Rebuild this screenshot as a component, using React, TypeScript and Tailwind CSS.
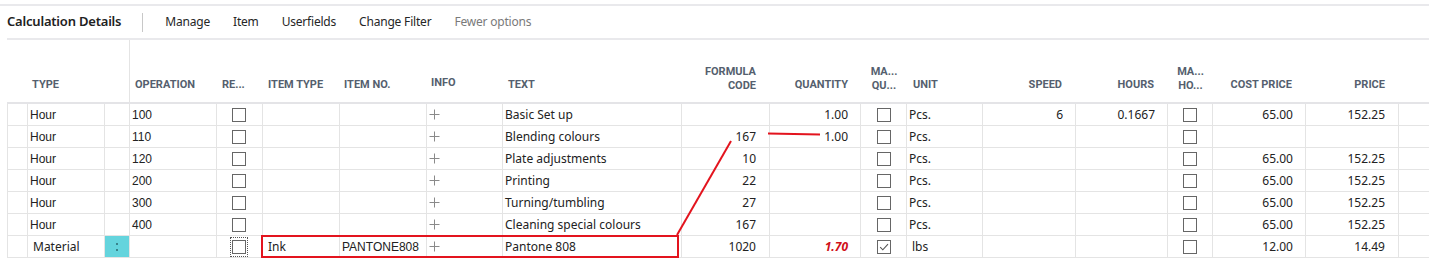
import React from "react";

const cols =
  "grid grid-cols-[21px_77px_25px_87px_46px_77px_87px_76px_179px_88px_91px_46px_76px_93px_92px_45px_93px_93px_30px]";

const seg = { fontFamily: '"Noto Sans", "Open Sans", sans-serif' };
const ari = { fontFamily: '"Liberation Sans", Arial, sans-serif' };
const hdr = { fontFamily: 'Roboto, "Liberation Sans", sans-serif' };

function Check({ checked = false, focus = false }: { checked?: boolean; focus?: boolean }) {
  return (
    <div className={`flex items-center justify-center ${focus ? "outline outline-1 outline-dotted outline-[#555] px-[1px] py-[2px]" : ""}`}>
      <div className="w-[14px] h-[14px] border border-[#666] bg-white flex items-center justify-center">
        {checked && (
          <svg width="12" height="12" viewBox="0 0 12 12">
            <path d="M2.2 6.2 L4.8 8.8 L10 3.2" stroke="#555" strokeWidth="1.1" fill="none" />
          </svg>
        )}
      </div>
    </div>
  );
}

function Plus() {
  return (
    <svg width="11" height="11" viewBox="0 0 11 11">
      <path d="M5.5 0.5 V10.5 M0.5 5.5 H10.5" stroke="#8a8a8a" strokeWidth="1" />
    </svg>
  );
}

type Row = {
  type: string;
  op: string;
  itemType?: string;
  itemNo?: string;
  text: string;
  formula: string;
  qty: string;
  unit: string;
  speed?: string;
  hours?: string;
  cost: string;
  price: string;
  material?: boolean;
};

const rows: Row[] = [
  { type: "Hour", op: "100", text: "Basic Set up", formula: "", qty: "1.00", unit: "Pcs.", speed: "6", hours: "0.1667", cost: "65.00", price: "152.25" },
  { type: "Hour", op: "110", text: "Blending colours", formula: "167", qty: "1.00", unit: "Pcs.", cost: "", price: "" },
  { type: "Hour", op: "120", text: "Plate adjustments", formula: "10", qty: "", unit: "Pcs.", cost: "65.00", price: "152.25" },
  { type: "Hour", op: "200", text: "Printing", formula: "22", qty: "", unit: "Pcs.", cost: "65.00", price: "152.25" },
  { type: "Hour", op: "300", text: "Turning/tumbling", formula: "27", qty: "", unit: "Pcs.", cost: "65.00", price: "152.25" },
  { type: "Hour", op: "400", text: "Cleaning special colours", formula: "167", qty: "", unit: "Pcs.", cost: "65.00", price: "152.25" },
  { type: "Material", op: "", itemType: "Ink", itemNo: "PANTONE808", text: "Pantone 808", formula: "1020", qty: "1.70", unit: "lbs", cost: "12.00", price: "14.49", material: true },
];

const cell = "border-r border-[#e4e4e4] h-full flex items-center overflow-hidden whitespace-nowrap text-[12px] text-[#222]";

export default function App() {
  return (
    <div className="w-[1429px] h-[262px] bg-white overflow-hidden relative">
      <div className="h-[4px]" />
      <div className="h-[34px] border-t-2 border-[#e9e9ec] flex items-center pl-[7px]" style={seg}>
        <span className="text-[13px] font-semibold text-[#212121] tracking-[-0.2px]">Calculation Details</span>
        <span className="ml-[21px] w-px h-[19px] bg-[#c8c8c8]" />
        <div className="flex items-center text-[12px] tracking-[-0.2px] text-[#262626] ml-[22px] gap-[23px]">
          <span>Manage</span>
          <span>Item</span>
          <span>Userfields</span>
          <span>Change Filter</span>
          <span className="text-[#7a7a7a]">Fewer options</span>
        </div>
      </div>
      <div className="ml-[7px] border-t-2 border-[#e9e9ec]">
        <div className={`${cols} h-[62px] text-[11px] font-bold text-[#555f6e] uppercase`} style={hdr}>
          <div />
          <div className="flex items-end pb-[9px] pl-[4px] col-span-1">TYPE</div>
          <div className="border-r border-[#e4e4e4]" />
          <div className="flex items-end pb-[9px] pl-[5px]">OPERATION</div>
          <div className="flex items-end pb-[9px] pl-[5px]">RE...</div>
          <div className="flex items-end pb-[9px] pl-[5px]">ITEM TYPE</div>
          <div className="flex items-end pb-[9px] pl-[4px]">ITEM NO.</div>
          <div className="flex items-end pb-[11px] pl-[4px]">INFO</div>
          <div className="flex items-end pb-[9px] pl-[5px]">TEXT</div>
          <div className="flex items-end justify-end pb-[9px] pr-[14px] text-right leading-[14px]">FORMULA<br />CODE</div>
          <div className="flex items-end justify-end pb-[9px] pr-[13px]">QUANTITY</div>
          <div className="flex items-end justify-center pb-[9px] leading-[14px] text-center">MA...<br />QU...</div>
          <div className="flex items-end pb-[9px] pl-[6px]">UNIT</div>
          <div className="flex items-end justify-end pb-[9px] pr-[14px]">SPEED</div>
          <div className="flex items-end justify-end pb-[9px] pr-[14px]">HOURS</div>
          <div className="flex items-end justify-center pb-[9px] leading-[14px] text-center">MA...<br />HO...</div>
          <div className="flex items-end justify-end pb-[9px] pr-[14px]">COST PRICE</div>
          <div className="flex items-end justify-end pb-[9px] pr-[14px]">PRICE</div>
          <div />
        </div>
        <div className="border-t-2 border-[#e4e4e7]">
          {rows.map((r, i) => (
            <div key={i} className={`${cols} h-[22px] border-b border-[#e4e4e4]`}>
              <div className={`${cell} border-l`} />
              <div className={`${cell} ${r.material ? "pl-[5px]" : "pl-[2px]"}`} style={r.material ? seg : ari}>{r.type}</div>
              <div className={`${cell} ${r.material ? "bg-[#64d4dd] justify-center" : ""}`}>
                {r.material && (
                  <svg width="4" height="12" viewBox="0 0 4 12">
                    <circle cx="2" cy="3" r="1" fill="#2a6a70" />
                    <circle cx="2" cy="9" r="1" fill="#2a6a70" />
                  </svg>
                )}
              </div>
              <div className={`${cell} pl-[2px]`} style={ari}>{r.op}</div>
              <div className={`${cell} justify-center pr-[1px]`}><Check focus={r.material} /></div>
              <div className={`${cell} pl-[5px]`} style={seg}>{r.itemType}</div>
              <div className={`${cell} pl-[2px]`} style={ari}>{r.itemNo}</div>
              <div className={`${cell} pl-[2px]`}><Plus /></div>
              <div className={`${cell} pl-[2px]`} style={seg}>{r.text}</div>
              <div className={`${cell} justify-end pr-[13px]`} style={seg}>{r.formula}</div>
              <div className={`${cell} justify-end pr-[12px]`} style={seg}>
                {r.material ? <span className="text-[#d0101a] font-bold italic">{r.qty}</span> : r.qty}
              </div>
              <div className={`${cell} justify-center`}><Check checked={r.material} /></div>
              <div className={`${cell} ${r.material ? "pl-[5px]" : "pl-[2px]"}`} style={seg}>{r.unit}</div>
              <div className={`${cell} justify-end pr-[12px]`} style={seg}>{r.speed}</div>
              <div className={`${cell} justify-end pr-[12px]`} style={seg}>{r.hours}</div>
              <div className={`${cell} justify-center`}><Check /></div>
              <div className={`${cell} justify-end pr-[12px]`} style={seg}>{r.cost}</div>
              <div className={`${cell} justify-end pr-[13px]`} style={seg}>{r.price}</div>
              <div className="h-full" />
            </div>
          ))}
        </div>
      </div>
      {/* annotations */}
      <div className="absolute left-[261px] top-[235px] w-[418px] h-[23px] border-2 border-[#e3141e]" />
      <svg className="absolute left-0 top-0 pointer-events-none" width="1429" height="262">
        <line x1="677" y1="235" x2="731" y2="141" stroke="#e3141e" strokeWidth="2" />
        <line x1="768" y1="133.5" x2="820" y2="134.5" stroke="#e3141e" strokeWidth="2" />
      </svg>
    </div>
  );
}
